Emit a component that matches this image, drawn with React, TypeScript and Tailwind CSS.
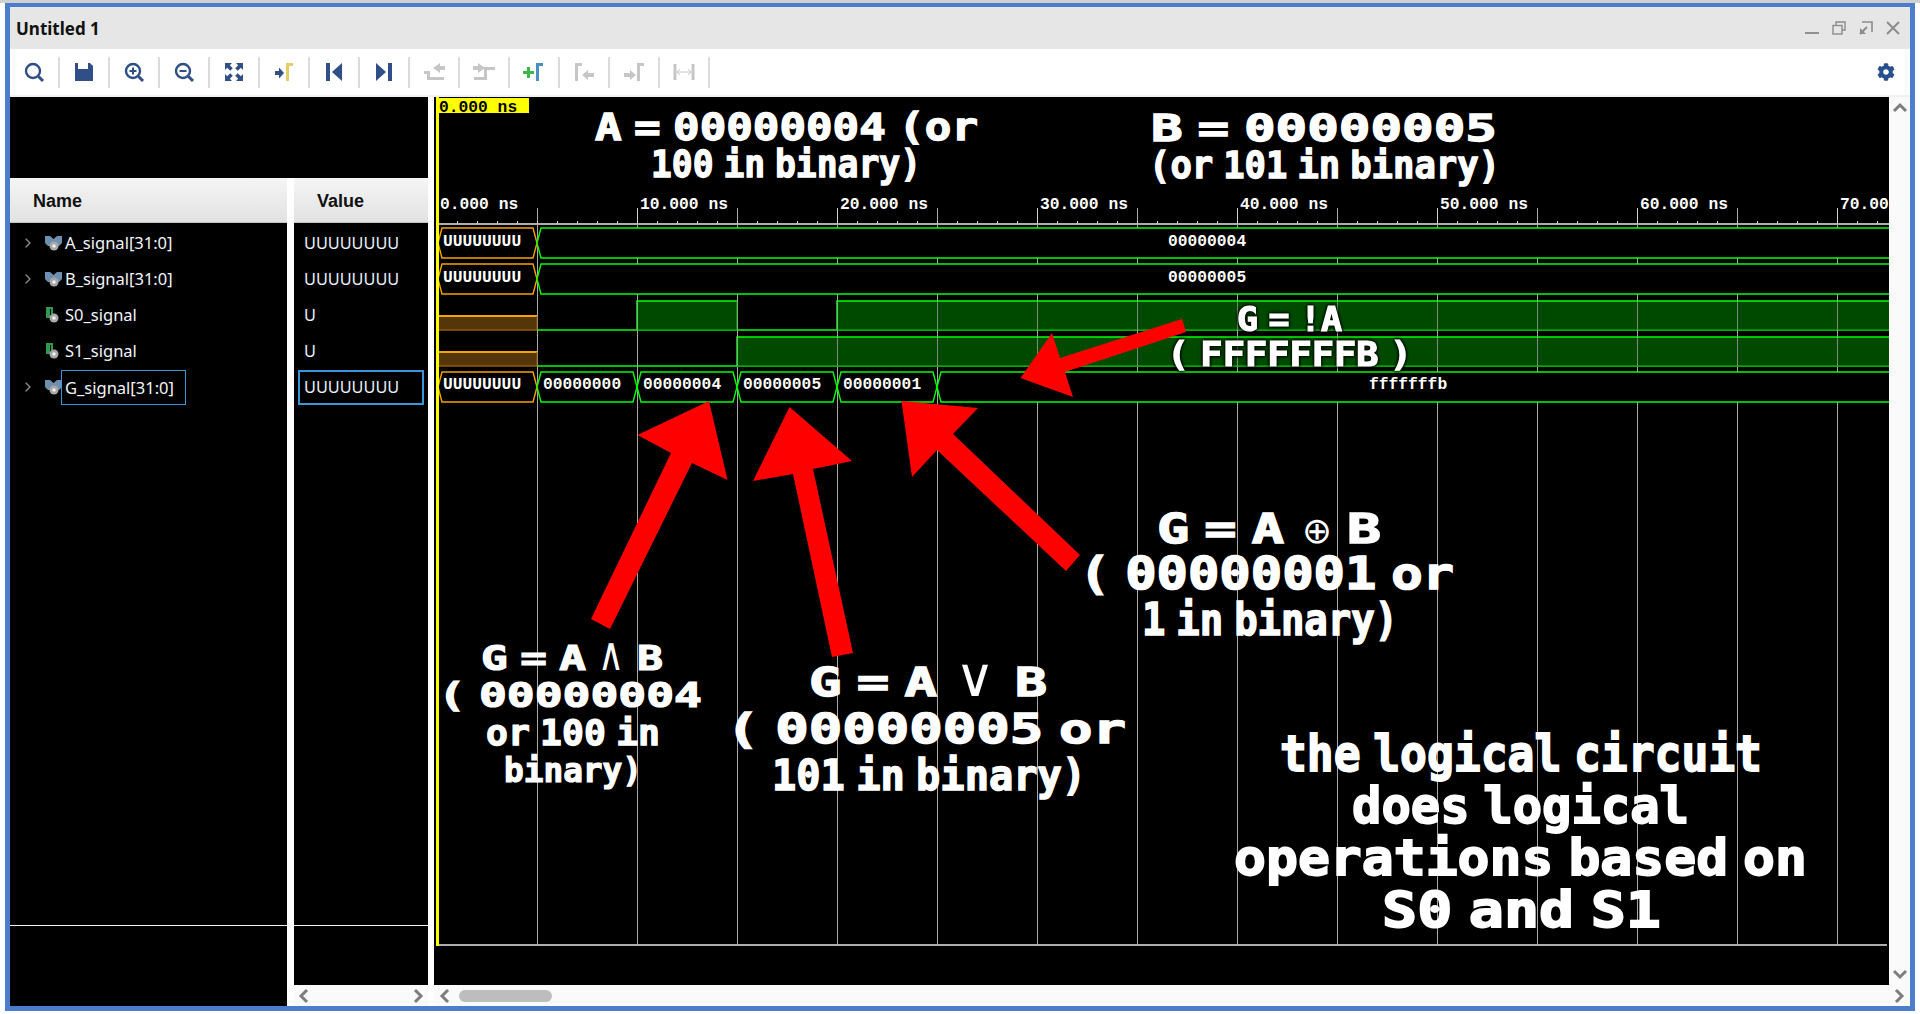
import { ChevronRight } from "lucide-react";
import { FaCog } from "react-icons/fa";
import type { ReactNode } from "react";

const BLUE = "#2f4f86";
const GREY = "#c6c6c6";
const GOLD = "#e6cd6b";
const LIVE = "#00ff00";
const DIM = "#00a000";
const FILL = "#004a00";
const ORANGE = "#f5a300";

function Tool({ children }: { children: ReactNode }) {
  return (
    <div className="flex h-[31px] w-[50px] items-center justify-center border-r-2 border-[#dcdcdc]">
      <svg width="24" height="24" viewBox="0 0 24 24">
        {children}
      </svg>
    </div>
  );
}

function Lens({ mark }: { mark?: ReactNode }) {
  return (
    <g fill="none" stroke={BLUE}>
      <circle cx="11" cy="11" r="7" strokeWidth="2.4" />
      <path d="M16.5 16.5l4.5 4.5" strokeWidth="3" />
      {mark}
    </g>
  );
}

function Gamma({ x, color }: { x: number; color: string }) {
  return <path d={`M${x} 21V3h7v3h-4v15z`} fill={color} />;
}

const tools: ReactNode[] = [
  <Lens />,
  <path d="M3 3h3v6h10V3h2l3 3v15H3z" fill={BLUE} />,
  <Lens mark={<path d="M7.5 11h7M11 7.5v7" strokeWidth="2" />} />,
  <Lens mark={<path d="M7.5 11h7" strokeWidth="2" />} />,
  <path
    d="M3 3h7L7.8 5.2l3 3-2.6 2.6-3-3L3 10zM21 3v7l-2.2-2.2-3 3-2.6-2.6 3-3L14 3zM3 21v-7l2.2 2.2 3-3 2.6 2.6-3 3L10 21zM21 21h-7l2.2-2.2-3-3 2.6-2.6 3 3L21 14z"
    fill={BLUE}
  />,
  <g>
    <path d="M3 11h4V7.5l5 5.5-5 5.5V15H3z" fill={BLUE} />
    <Gamma x={14} color={GOLD} />
  </g>,
  <g fill={BLUE}>
    <rect x="4" y="3" width="4" height="18" />
    <path d="M20 3v18L10 12z" />
  </g>,
  <g fill={BLUE}>
    <rect x="16" y="3" width="4" height="18" />
    <path d="M4 3v18l10-9z" />
  </g>,
  <g fill={GREY}>
    <path d="M11 8l7-5v3h5v4h-5v3z" />
    <path d="M2 11h6v6h14v3H5v-6H2z" />
  </g>,
  <g fill={GREY}>
    <path d="M13 8L6 3v3H1v4h5v3z" />
    <path d="M23 10h-8v10H2v-3h10v-10h11z" />
  </g>,
  <g>
    <path d="M1 11h4V7h3v4h4v3H8v4H5v-4H1z" fill="#3eb54a" />
    <Gamma x={14} color="#4a8fc0" />
  </g>,
  <g fill={GREY}>
    <Gamma x={3} color={GREY} />
    <path d="M10 15l6-5v3h6v4h-6v3z" />
  </g>,
  <g fill={GREY}>
    <path d="M2 13h6v-3l6 5-6 5v-3H2z" />
    <Gamma x={15} color={GREY} />
  </g>,
  <g fill="none" stroke={GREY}>
    <path d="M3 4v16M21 4v16" strokeWidth="3" />
    <path d="M6 12h12M8 9l-3 3 3 3M16 9l3 3-3 3" strokeWidth="1" />
  </g>,
];

function SignalIcon({ bus }: { bus: boolean }) {
  return (
    <svg width="17" height="17" viewBox="0 0 17 17" className="shrink-0">
      {bus ? (
        <path d="M0 1h5l3.5 3L12 1h5v7l-3 3H3L0 8z" fill="#6f8fae" />
      ) : (
        <path d="M1 0h2v11H1zM1 0h7v2H5v9H3V2H1zM6 0h2v7H6z" fill="#2f9a4c" />
      )}
      <circle cx="9" cy="11" r="4.5" fill="#a8a8a8" />
      <circle cx="9" cy="11" r="1.8" fill="#f0f0f0" />
    </svg>
  );
}

const signals = [
  { name: "A_signal[31:0]", value: "UUUUUUUU", bus: true },
  { name: "B_signal[31:0]", value: "UUUUUUUU", bus: true },
  { name: "S0_signal", value: "U", bus: false },
  { name: "S1_signal", value: "U", bus: false },
  { name: "G_signal[31:0]", value: "UUUUUUUU", bus: true, selected: true },
];

function hex(x0: number, x1: number, top: number) {
  const bot = top + 30;
  const mid = top + 15;
  return `${x0},${mid} ${x0 + 4},${top} ${x1 - 4},${top} ${x1},${mid} ${x1 - 4},${bot} ${x0 + 4},${bot}`;
}

function Bus({ top, cuts, base }: { top: number; cuts: number[]; base: number }) {
  return (
    <g fill="#000" strokeWidth="1.4">
      <polygon points={hex(438, 537, top)} stroke={ORANGE} />
      {cuts.slice(0, -1).map((c, i) => (
        <polygon key={c} points={hex(c, cuts[i + 1], top)} stroke={LIVE} />
      ))}
      <Mono x={443} y={base}>
        UUUUUUUU
      </Mono>
    </g>
  );
}

function Mono({ x, y, children, fill = "#fff" }: { x: number; y: number; children: ReactNode; fill?: string }) {
  return (
    <text x={x} y={y} fill={fill} stroke="none" fontSize="16.3" className="font-['Liberation_Mono',monospace] font-bold">
      {children}
    </text>
  );
}

function Logic({ top, low, from, highs }: { top: number; low: number; from: number; highs: number[][] }) {
  return (
    <g>
      <rect x="439" y={from} width="98" height={low - from} fill="#54360a" />
      <path d={`M439 ${from}H537`} stroke={ORANGE} strokeWidth="2" />
      <path d={`M439 ${low}H537`} stroke="#8f5d10" strokeWidth="1.5" />
      <path d={`M537 ${from}V${low}`} stroke="#8f5d10" strokeWidth="1" />
      <path d={`M537 ${low}H1889`} stroke={LIVE} strokeWidth="1.5" />
      {highs.map(([a, b]) => (
        <g key={a}>
          <rect x={a} y={top} width={b - a} height={low - top} fill={FILL} />
          <path d={`M${a} ${low}V${top}H${b}`} fill="none" stroke={LIVE} strokeWidth="1.5" />
          <path d={`M${a} ${low}H${b}`} stroke={DIM} strokeWidth="1.5" />
          {b < 1880 && <path d={`M${b} ${top}V${low}`} stroke={DIM} strokeWidth="1.5" />}
        </g>
      ))}
    </g>
  );
}

const captions = [
  { t: "A = 00000004 (or", a: 595, b: 978, y: 140, s: 37 },
  { t: "100 in binary)", a: 651, b: 921, y: 177, s: 37 },
  { t: "B = 00000005", a: 1151, b: 1497, y: 141, s: 38 },
  { t: "(or 101 in binary)", a: 1149, b: 1500, y: 178, s: 38 },
  { t: "G = A", a: 481, b: 586, y: 670, s: 34 },
  { t: "B", a: 637, b: 663, y: 670, s: 34 },
  { t: "( 00000004", a: 438, b: 702, y: 707, s: 33 },
  { t: "or 100 in", a: 486, b: 660, y: 745, s: 35 },
  { t: "binary)", a: 504, b: 642, y: 782, s: 34 },
  { t: "G = A", a: 809, b: 937, y: 696, s: 39 },
  { t: "B", a: 1015, b: 1047, y: 696, s: 39 },
  { t: "( 00000005 or", a: 726, b: 1126, y: 743, s: 41 },
  { t: "101 in binary)", a: 772, b: 1086, y: 790, s: 42 },
  { t: "G = A", a: 1157, b: 1284, y: 543, s: 41 },
  { t: "B", a: 1347, b: 1381, y: 543, s: 41 },
  { t: "( 00000001 or", a: 1079, b: 1454, y: 589, s: 44 },
  { t: "1 in binary)", a: 1142, b: 1398, y: 635, s: 44 },
  { t: "the logical circuit", a: 1280, b: 1762, y: 771, s: 50 },
  { t: "does logical", a: 1352, b: 1689, y: 823, s: 50 },
  { t: "operations based on", a: 1234, b: 1807, y: 875, s: 50 },
  { t: "S0 and S1", a: 1382, b: 1661, y: 927, s: 50 },
];

// logic symbols sit in a lighter face than the rest of the caption
const symbols = [
  { t: "∧", a: 598, b: 624, y: 670, s: 46 },
  { t: "∨", a: 955, b: 995, y: 696, s: 54 },
  { t: "⊕", a: 1302, b: 1332, y: 543, s: 36 },
];

const arrows = [
  "709,401 727.5,480 692,463 610,629 591,619 671,453 637.5,435",
  "789.5,407 852,461 813,469 853,653 832,657 793,474 753,481",
  "901.5,401 978,408 953,434 1080,555 1066,571 937,450 912,477",
  "1020.5,378 1052,333 1060,358 1182,319 1186,332 1065,372 1073,397",
];

function Wave() {
  const ticks = Array.from({ length: 73 }, (_, i) => 437 + i * 20);
  const majors = Array.from({ length: 14 }, (_, i) => 537 + i * 100);
  const stamps = ["0.000", "10.000", "20.000", "30.000", "40.000", "50.000", "60.000", "70.000"];
  const cuts = [537, 637, 737, 837, 937, 1900];
  return (
    <svg width="1455" height="888" viewBox="434 97 1455 888" className="block">
      <path d="M437 224H1889M439 945H1887" stroke="#e8e8e8" strokeWidth="1.5" />
      {majors.map((x) => (
        <path key={x} d={`M${x + 0.5} ${(x - 437) % 200 === 0 ? 219 : 208}V945`} stroke="#a8a8a8" strokeWidth="1" />
      ))}
      {ticks.map((x) => (
        <path key={x} d={`M${x + 0.5} 221V224`} stroke="#d0d0d0" strokeWidth="1" />
      ))}
      {stamps.map((s, i) => (
        <g key={s}>
          <path d={`M${437 + i * 200 + 0.5} 208V224`} stroke="#d0d0d0" strokeWidth="1" />
          <Mono x={440 + i * 200} y={209}>
            {s} ns
          </Mono>
        </g>
      ))}

      <Bus top={228} cuts={[537, 1900]} base={246} />
      <Bus top={264} cuts={[537, 1900]} base={282} />
      <Logic top={301} low={330} from={316} highs={[[637, 737], [837, 1900]]} />
      <Logic top={337} low={366} from={352} highs={[[737, 1900]]} />
      <Bus top={372} cuts={cuts} base={389} />
      {majors
        .filter((x) => x > 537)
        .map((x) => (
          <path key={x} d={`M${x + 0.5} 301V366`} stroke="#a8a8a8" strokeWidth="1" opacity="0.7" />
        ))}

      <Mono x={1168} y={246}>00000004</Mono>
      <Mono x={1168} y={282}>00000005</Mono>
      <Mono x={543} y={389}>00000000</Mono>
      <Mono x={643} y={389}>00000004</Mono>
      <Mono x={743} y={389}>00000005</Mono>
      <Mono x={843} y={389}>00000001</Mono>
      <Mono x={1369} y={389}>fffffffb</Mono>

      <rect x="436" y="97" width="3" height="849" fill="#ffff00" />
      <rect x="437" y="98" width="92" height="15" fill="#ffff00" />
      <Mono x={439} y={112} fill="#000">
        0.000 ns
      </Mono>

      {arrows.map((p) => (
        <polygon key={p} points={p} fill="#ff0000" />
      ))}

      {captions.map((c) => (
        <text
          key={c.t + c.a}
          x={c.a}
          y={c.y}
          fontSize={c.s}
          textLength={c.b - c.a}
          lengthAdjust="spacingAndGlyphs"
          wordSpacing={-c.s * 0.32}
          fill="#fff"
          stroke="#fff"
          strokeWidth={c.s / 28}
          className="font-['DejaVu_Sans_Mono',monospace] font-bold"
        >
          {c.t}
        </text>
      ))}
      {symbols.map((c) => (
        <text
          key={c.t}
          x={c.a}
          y={c.y}
          fontSize={c.s}
          textLength={c.b - c.a}
          lengthAdjust="spacingAndGlyphs"
          fill="#fff"
          className="font-['DejaVu_Sans',sans-serif]"
        >
          {c.t}
        </text>
      ))}
      {[
        { t: "G = !A", a: 1237, b: 1342, y: 331 },
        { t: "( FFFFFFFB )", a: 1167, b: 1412, y: 366 },
      ].map((c) => (
        <text
          key={c.t}
          x={c.a}
          y={c.y}
          fontSize="33"
          textLength={c.b - c.a}
          lengthAdjust="spacingAndGlyphs"
          wordSpacing={-10}
          fill="#fff"
          stroke="#fff"
          strokeWidth="1.2"
          className="font-['DejaVu_Sans_Mono',monospace] font-bold [filter:drop-shadow(0_0_1.5px_#000)_drop-shadow(0_0_1.5px_#000)]"
        >
          {c.t}
        </text>
      ))}
    </svg>
  );
}

function Caret({ d, className }: { d: string; className: string }) {
  return (
    <svg width="16" height="16" viewBox="0 0 16 16" className={className}>
      <path d={d} fill="none" stroke="#7d7d7d" strokeWidth="3" />
    </svg>
  );
}

export default function App() {
  return (
    <div className="h-[1014px] w-[1920px] overflow-hidden bg-white pl-[5px] pr-[5px] pt-[3px] font-['Noto_Sans',sans-serif] shadow-[inset_0_3px_0_#d0d0d0]">
      <div className="flex h-[1008px] flex-col border-b-[5px] border-l-[5px] border-r-[5px] border-t-[4px] border-[#4a7dcb]">
        {/* Title bar */}
        <div className="flex h-[42px] shrink-0 items-center justify-between bg-[#e6e6e6] pl-[6px] pr-[10px]">
          <span className="text-[17px] leading-none font-bold text-[#111]">Untitled 1</span>
          <div className="flex items-center gap-[13px]">
            <svg width="14" height="14" viewBox="0 0 14 14">
              <path d="M0 12h14" stroke="#909090" strokeWidth="2" />
            </svg>
            <svg width="14" height="14" viewBox="0 0 14 14" fill="none" stroke="#8c8c8c" strokeWidth="1.4">
              <path d="M4 4V1h9v8h-3" />
              <rect x="1" y="4.5" width="9" height="8.5" />
            </svg>
            <svg width="14" height="14" viewBox="0 0 14 14" fill="none" stroke="#8c8c8c">
              <path d="M3 1h10v10" strokeWidth="1.6" />
              <path d="M1 13l7-7" strokeWidth="2.2" />
              <path d="M1 7v6h6z" fill="#8c8c8c" strokeWidth="0" />
            </svg>
            <svg width="14" height="14" viewBox="0 0 14 14">
              <path d="M1 1l12 12M13 1L1 13" stroke="#8c8c8c" strokeWidth="2" />
            </svg>
          </div>
        </div>

        {/* Toolbar */}
        <div className="flex h-[46px] shrink-0 items-center justify-between pr-[15px]">
          <div className="flex">
            {tools.map((t, i) => (
              <Tool key={i}>{t}</Tool>
            ))}
          </div>
          <FaCog size={18} color="#2a4f8f" />
        </div>
        <div className="h-[2px] shrink-0 bg-[#f0f0f0]" />

        {/* Main area */}
        <div className="flex min-h-0 flex-1">
          <div className="flex w-[418px] shrink-0 flex-col">
            <div className="h-[81px] shrink-0 bg-black" />
            <div className="flex flex-1">
              <div className="flex w-[277px] shrink-0 flex-col bg-black">
                <div className="flex h-[45px] shrink-0 items-center border-b border-[#c4c4c4] bg-gradient-to-b from-[#f5f5f5] to-[#e2e2e2] pl-[23px] pt-[3px] font-['Liberation_Sans',sans-serif] text-[18px] font-bold text-[#111]">
                  Name
                </div>
                <div className="flex flex-1 flex-col pt-[2px]">
                  {signals.map((s) => (
                    <div key={s.name} className="flex h-9 items-center text-[16.5px] text-[#f2f6fa]">
                      <ChevronRight size={16} color="#8a8a8a" className={s.bus ? "ml-[10px] shrink-0" : "invisible ml-[10px] shrink-0"} />
                      <span className="ml-[9px]">
                        <SignalIcon bus={s.bus} />
                      </span>
                      <span className={s.selected ? "ml-[-1px] h-[35px] w-[125px] border border-[#3a96d8] pl-[3px] leading-[33px]" : "ml-[3px]"}>
                        {s.name}
                      </span>
                    </div>
                  ))}
                  <div className="mt-[520px] h-px bg-[#f0f0f0]" />
                </div>
              </div>
              <div className="w-[7px] shrink-0 bg-white" />
              <div className="flex flex-1 flex-col">
                <div className="flex h-[45px] shrink-0 items-center border-b border-[#c4c4c4] bg-gradient-to-b from-[#f5f5f5] to-[#e2e2e2] pl-[23px] pt-[3px] font-['Liberation_Sans',sans-serif] text-[18px] font-bold text-[#111]">
                  Value
                </div>
                <div className="flex flex-1 flex-col bg-black pt-[2px]">
                  {signals.map((s) => (
                    <div key={s.name} className="flex h-9 items-center text-[16.3px] text-[#e6f0fa]">
                      <span className={s.selected ? "ml-[4px] h-[35px] w-[126px] border-2 border-[#3a96d8] pl-[4px] leading-[31px]" : "ml-[10px]"}>
                        {s.value}
                      </span>
                    </div>
                  ))}
                  <div className="mt-[520px] h-px bg-[#f0f0f0]" />
                </div>
                <div className="flex h-[21px] shrink-0 items-center justify-between bg-[#fafafa] px-[2px]">
                  <Caret d="M11 2L5 8l6 6" className="" />
                  <Caret d="M5 2l6 6-6 6" className="" />
                </div>
              </div>
            </div>
          </div>

          <div className="w-[6px] shrink-0 bg-white" />

          <div className="flex min-w-0 flex-1 flex-col">
            <div className="flex h-[888px] shrink-0">
              <div className="h-[888px] w-[1455px] shrink-0 bg-black">
                <Wave />
              </div>
              <div className="flex flex-1 flex-col items-center justify-between bg-[#fafafa] py-[3px]">
                <Caret d="M2 11l6-6 6 6" className="" />
                <Caret d="M2 5l6 6 6-6" className="" />
              </div>
            </div>
            <div className="flex h-[21px] shrink-0 items-center bg-[#fafafa] px-[3px]">
              <Caret d="M11 2L5 8l6 6" className="" />
              <div className="ml-[6px] h-3 w-[93px] rounded-full bg-[#bdbdbd]" />
              <Caret d="M5 2l6 6-6 6" className="ml-auto" />
            </div>
          </div>
        </div>
      </div>
    </div>
  );
}
